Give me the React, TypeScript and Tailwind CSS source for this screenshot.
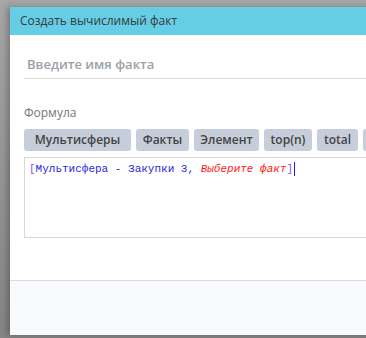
import React from "react";

const knopki = [
  { t: "Мультисферы", w: "w-[107px]" },
  { t: "Факты", w: "w-[53px]" },
  { t: "Элемент", w: "w-[65px]" },
  { t: "top(n)", w: "w-[48px]" },
  { t: "total", w: "w-[41px]" },
  { t: "", w: "w-[46px]" },
];

export default function App() {
  return (
    <div
      className="w-[366px] h-[338px] overflow-hidden bg-gradient-to-b from-[#a6a6a6] to-[#858585] pl-[10px] pt-[7px]"
      style={{ fontFamily: '"Open Sans", "Noto Sans", sans-serif' }}
    >
      <div className="w-[600px] h-[328px] bg-white flex flex-col shadow-[-3px_0_6px_rgba(0,0,0,0.25)]">
        <div className="h-[28px] bg-[#65cee6] flex items-center pl-[10px] text-[12px] text-[#3a3a3a]">
          Создать вычислимый факт
        </div>
        <div className="flex-1 px-[14px]">
          <div className="h-[44px] border-b border-[#dcdcdc] pl-[3px] pt-[20px] text-[13px] leading-[18px] font-semibold text-[#9ba1a8]">
            Введите имя факта
          </div>
          <div className="mt-[26px] text-[12px] leading-[16px] text-[#777]">Формула</div>
          <div className="mt-[8px] flex gap-[5px]">
            {knopki.map((k, i) => (
              <div
                key={i}
                className={`${k.w} h-[22px] shrink-0 rounded-[3px] bg-[#c5ceda] flex items-center justify-center text-[12px] font-semibold text-[#444]`}
              >
                {k.t}
              </div>
            ))}
          </div>
          <div className="mt-[6px] h-[81px] border border-[#d8d8d8] px-[4px] pt-[3px] text-[11px] leading-[16px]" style={{ fontFamily: '"Liberation Mono", monospace' }}>
            <span className="text-[#8a4cff]">[</span>
            <span className="text-[#1f1fe0]">Мультисфера - Закупки 3, </span>
            <span className="text-[#ff1a1a] italic">Выберите факт</span>
            <span className="text-[#8a4cff]">]</span>
            <span className="inline-block w-[1px] h-[14px] bg-[#1f1fe0] align-middle ml-[1px]"></span>
          </div>
        </div>
        <div className="h-[55px] border-t border-[#dcdcdc] bg-[#f9fafd]"></div>
      </div>
    </div>
  );
}
